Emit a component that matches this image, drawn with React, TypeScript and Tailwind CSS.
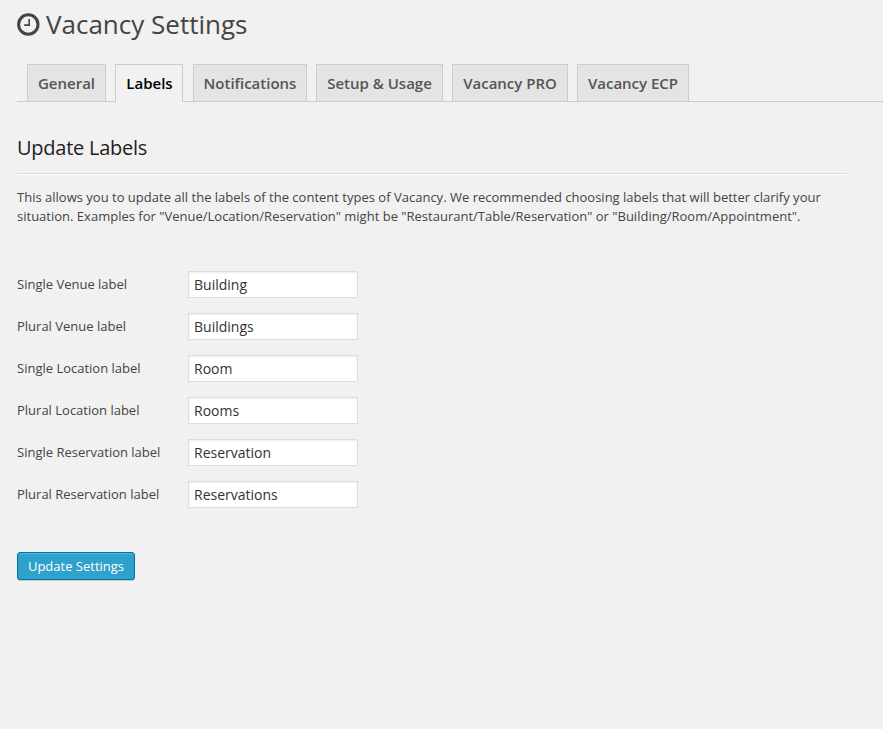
const tabs: [string, string][] = [
  ["General", "w-[79px]"],
  ["Labels", "mr-px w-[68px] pl-px"],
  ["Notifications", "w-[114px]"],
  ["Setup & Usage", "w-[127px]"],
  ["Vacancy PRO", "w-[116px]"],
  ["Vacancy ECP", "w-[112px]"],
];
const fields = [
  ["Single Venue label", "Building"],
  ["Plural Venue label", "Buildings"],
  ["Single Location label", "Room"],
  ["Plural Location label", "Rooms"],
  ["Single Reservation label", "Reservation"],
  ["Plural Reservation label", "Reservations"],
];

export default function App() {
  return (
    <div className="h-[729px] w-[883px] overflow-hidden bg-[#f1f1f1] pl-[17px] font-['Open_Sans',sans-serif] text-[13px] text-[#444]">
      <header className="flex h-[64px] items-start">
        <svg className="mt-[13px] h-6 w-6" viewBox="0 0 24 24" fill="none" stroke="#444" aria-hidden="true">
          <circle cx="11.3" cy="11.5" r="9.7" strokeWidth="3" />
          <path d="M12.2 6v6.1H7.2" strokeWidth="1.6" />
        </svg>
        <h1 className="ml-[5px] mt-[5px] whitespace-nowrap text-[26px] leading-[38px] text-[#444]">Vacancy Settings</h1>
      </header>
      <nav className="flex h-[38px] gap-[9px] border-b border-[#ccc] pl-[10px]">
        {tabs.map(([name, width]) => (
          <button
            key={name}
            className={`${width} shrink-0 whitespace-nowrap border border-b-0 border-[#ccc] text-center text-[15px] font-semibold leading-[37px] ${name === "Labels" ? "h-[38px] bg-[#f1f1f1] text-black" : "h-[37px] bg-[#e4e4e4] text-[#555]"}`}
          >
            {name}
          </button>
        ))}
      </nav>
      <main className="w-[830px]">
        <h2 className="h-[72px] border-b border-[#ddd] pt-[32px] text-[20px] leading-[28px] tracking-[-0.25px] text-[#222] shadow-[0_1px_0_#f9f9f9]">Update Labels</h2>
        <p className="mt-[14px] whitespace-nowrap leading-[19px] tracking-[0.006px]">
          This allows you to update all the labels of the content types of Vacancy. We recommended choosing labels that will better clarify your<br />
          situation. Examples for "Venue/Location/Reservation" might be "Restaurant/Table/Reservation" or "Building/Room/Appointment".
        </p>
        <form className="mt-[45px]">
          <div className="grid gap-[15px]">
            {fields.map(([label, value]) => (
              <label key={label} className="flex h-[27px] items-center">
                <span className="w-[171px]">{label}</span>
                <input
                  type="text"
                  defaultValue={value}
                  className="h-[27px] w-[170px] border border-[#ddd] bg-white px-[5px] text-[14px] text-[#333] shadow-[inset_0_1px_2px_rgba(0,0,0,0.07)] outline-none"
                />
              </label>
            ))}
          </div>
          <button
            type="button"
            className="mt-[44px] h-[28px] w-[118px] whitespace-nowrap rounded-[3px] border border-[#0074a2] bg-[#2ea2cc] text-[13px] leading-[26px] text-white shadow-[inset_0_1px_0_rgba(120,200,230,0.5),0_1px_0_rgba(0,0,0,0.15)]"
          >
            Update Settings
          </button>
        </form>
      </main>
    </div>
  );
}
